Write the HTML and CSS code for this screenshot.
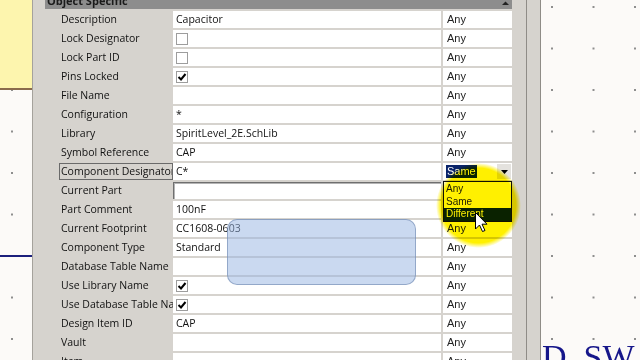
FILE: index.html
```html
<!DOCTYPE html>
<html lang="en">

<head>
  <meta charset="UTF-8">
  <meta name="viewport" content="width=device-width, initial-scale=1.0">
  <title>Inspector - Object Specific</title>
  <link rel="stylesheet" href="styles.css">
</head>

<body>
<div class="screen">
  <div class="sheet sheet_left">
    <div class="title_block"></div>
    <div class="wire"></div>
  </div>

  <div class="inspector">
    <div class="group_head">
      <span>Object Specific</span>
      <svg class="head_arrow" width="7" height="5" viewBox="0 0 7 5"><path d="M0 4 L3.5 0.5 L7 4 Z" fill="#222"/></svg>
    </div>

    <div class="prop_row"><div class="prop_name">Description</div><div class="prop_val">Capacitor</div><div class="prop_scope">Any</div></div>
    <div class="prop_row"><div class="prop_name">Lock Designator</div><div class="prop_val"><span class="check"></span></div><div class="prop_scope">Any</div></div>
    <div class="prop_row"><div class="prop_name">Lock Part ID</div><div class="prop_val"><span class="check"></span></div><div class="prop_scope">Any</div></div>
    <div class="prop_row"><div class="prop_name">Pins Locked</div><div class="prop_val"><span class="check"><svg width="10" height="10" viewBox="0 0 10 10"><path d="M1.5 5 L4 7.5 L8.5 2" fill="none" stroke="#000" stroke-width="2"/></svg></span></div><div class="prop_scope">Any</div></div>
    <div class="prop_row"><div class="prop_name">File Name</div><div class="prop_val"></div><div class="prop_scope">Any</div></div>
    <div class="prop_row"><div class="prop_name">Configuration</div><div class="prop_val">*</div><div class="prop_scope">Any</div></div>
    <div class="prop_row"><div class="prop_name">Library</div><div class="prop_val">SpiritLevel_2E.SchLib</div><div class="prop_scope">Any</div></div>
    <div class="prop_row"><div class="prop_name">Symbol Reference</div><div class="prop_val">CAP</div><div class="prop_scope">Any</div></div>
    <div class="prop_row">
      <div class="prop_name focus"><span class="focus_box">Component Designator</span></div>
      <div class="prop_val">C*</div>
      <div class="prop_scope combo">
        <span class="sel">Same</span>
        <span class="drop_btn"><svg width="7" height="4" viewBox="0 0 7 4"><path d="M0 0 L7 0 L3.5 4 Z" fill="#000"/></svg></span>
        <div class="drop_list">
          <div>Any</div>
          <div>Same</div>
          <div class="hot">Different</div>
        </div>
      </div>
    </div>
    <div class="prop_row"><div class="prop_name">Current Part</div><div class="prop_val edit"></div><div class="prop_scope">Any</div></div>
    <div class="prop_row"><div class="prop_name">Part Comment</div><div class="prop_val">100nF</div><div class="prop_scope">Any</div></div>
    <div class="prop_row"><div class="prop_name">Current Footprint</div><div class="prop_val">CC1608-0603</div><div class="prop_scope">Any</div></div>
    <div class="prop_row"><div class="prop_name">Component Type</div><div class="prop_val">Standard</div><div class="prop_scope">Any</div></div>
    <div class="prop_row"><div class="prop_name">Database Table Name</div><div class="prop_val"></div><div class="prop_scope">Any</div></div>
    <div class="prop_row"><div class="prop_name">Use Library Name</div><div class="prop_val"><span class="check"><svg width="10" height="10" viewBox="0 0 10 10"><path d="M1.5 5 L4 7.5 L8.5 2" fill="none" stroke="#000" stroke-width="2"/></svg></span></div><div class="prop_scope">Any</div></div>
    <div class="prop_row"><div class="prop_name">Use Database Table Name</div><div class="prop_val"><span class="check"><svg width="10" height="10" viewBox="0 0 10 10"><path d="M1.5 5 L4 7.5 L8.5 2" fill="none" stroke="#000" stroke-width="2"/></svg></span></div><div class="prop_scope">Any</div></div>
    <div class="prop_row"><div class="prop_name">Design Item ID</div><div class="prop_val">CAP</div><div class="prop_scope">Any</div></div>
    <div class="prop_row"><div class="prop_name">Vault</div><div class="prop_val"></div><div class="prop_scope">Any</div></div>
    <div class="prop_row"><div class="prop_name">Item</div><div class="prop_val"></div><div class="prop_scope">Any</div></div>
  </div>

  <div class="splitter"></div>

  <div class="sheet sheet_right">
    <div class="net_label">D_SW</div>
  </div>
</div>

<!-- overlays from the screen recording -->
<div class="hint_box"></div>
<div class="cursor_glow"></div>
<svg class="cursor" width="13" height="21" viewBox="0 0 13 21">
  <path d="M0.5 0.5 L0.5 17 L4.5 13 L7.5 19.5 L10 18.5 L7 12.2 L12 12.2 Z" fill="#fff" stroke="#000" stroke-width="1"/>
</svg>
</body>

</html>
```

FILE: styles.css
```css
* {
    box-sizing: border-box;
}

body {
    margin: 0;
    width: 640px;
    height: 360px;
    overflow: hidden;
    position: relative;
    background-color: #fcf9f7;
}

.screen {
    display: flex;
    height: 360px;
}

/* schematic sheets */
.sheet {
    position: relative;
    overflow: hidden;
    background-color: #fcfaf8;
    background-image: radial-gradient(circle, #8d8d8d 0, #8d8d8d 0.7px, transparent 1.2px);
    background-size: 41.5px 41.5px;
}

.sheet_left {
    width: 32px;
    background-position: -8.75px -13.75px;
}

.sheet_right {
    flex: 1;
    background-position: -9.75px -13.75px;
}

.title_block {
    height: 90px;
    background-color: #fdf5ae;
    border-bottom: 2px solid #8a6b4c;
}

.wire {
    margin-top: 165px;
    height: 2px;
    background-color: #1c1f7c;
}

.net_label {
    position: absolute;
    left: 1px;
    top: 340px;
    font-family: "Liberation Serif", "Times New Roman", serif;
    font-size: 34px;
    line-height: 34px;
    color: #16168a;
    white-space: nowrap;
}

/* inspector panel */
.inspector {
    width: 494px;
    background-color: #d6d3ce;
    border-left: 1px solid #a5a29c;
    padding: 0 14px 0 12px;
    font-family: "Open Sans", sans-serif;
    font-size: 10.5px;
    color: #111;
}

.group_head {
    display: flex;
    justify-content: space-between;
    margin-top: -10px;
    height: 19px;
    padding: 3px 3px 0 2px;
    line-height: 16px;
    background-color: #8d8d8d;
    color: #1b1b1b;
    font-weight: bold;
    font-size: 11px;
}

.head_arrow {
    margin-top: 8px;
}

.prop_row {
    display: flex;
    height: 17px;
    margin-top: 2px;
    line-height: 17px;
}

.prop_name {
    width: 128px;
    padding-left: 16px;
    white-space: nowrap;
    overflow: hidden;
}

.prop_name.focus {
    padding-left: 14px;
}

.focus_box {
    display: block;
    height: 17px;
    line-height: 15px;
    padding-left: 1px;
    border: 1px solid #6a6a6a;
    overflow: hidden;
}

.prop_val {
    width: 268px;
    padding-left: 3px;
    background-color: #fff;
    white-space: nowrap;
    overflow: hidden;
}

.prop_val.edit {
    border-top: 1px solid #6f6f6f;
    border-left: 1px solid #6f6f6f;
    box-shadow: inset 1px 1px 0 #b4b4b4;
}

.check {
    display: flex;
    align-items: center;
    justify-content: center;
    width: 12px;
    height: 12px;
    margin-top: 3px;
    border: 1px solid #9d9d9d;
    background-color: #fff;
}

.prop_scope {
    position: relative;
    width: 69px;
    margin-left: 2px;
    padding-left: 4px;
    background-color: #fff;
    font-family: "Liberation Sans", Arial, sans-serif;
    font-size: 11px;
    color: #222;
}

/* combo box with open list */
.prop_scope.combo {
    display: flex;
    align-items: center;
    justify-content: space-between;
    padding: 0 1px 0 3px;
}

.sel {
    padding: 0 1px;
    line-height: 13px;
    background-color: #0a246a;
    color: #fff;
}

.drop_btn {
    display: flex;
    align-items: center;
    justify-content: center;
    width: 14px;
    height: 15px;
    background-color: #e4e2de;
}

.drop_list {
    position: absolute;
    top: calc(100% + 1px);
    left: 0;
    z-index: 2;
    width: 69px;
    padding: 1px 0 0;
    border: 1px solid #111;
    background-color: #fff;
    color: #222;
    font-size: 10px;
}

.drop_list div {
    height: 12.5px;
    line-height: 12.5px;
    padding-left: 2px;
}

.drop_list .hot {
    background-color: #0a246a;
    color: #fff;
}

.splitter {
    width: 15px;
    background-color: #d6d3ce;
    border-left: 1px solid #8f8c87;
    border-right: 1px solid #8f8c87;
}

/* recording overlays */
.hint_box {
    position: absolute;
    left: 227px;
    top: 219px;
    width: 189px;
    height: 66px;
    border-radius: 10px;
    background-color: rgba(150, 180, 225, 0.5);
    border: 1px solid rgba(110, 135, 175, 0.6);
}

.cursor_glow {
    position: absolute;
    z-index: 3;
    left: 436px;
    top: 163px;
    width: 85px;
    height: 85px;
    border-radius: 50%;
    background: radial-gradient(circle closest-side, #fff000 88%, rgba(255, 240, 0, 0) 100%);
    mix-blend-mode: multiply;
}

.cursor {
    position: absolute;
    z-index: 4;
    left: 475px;
    top: 212px;
}
```
